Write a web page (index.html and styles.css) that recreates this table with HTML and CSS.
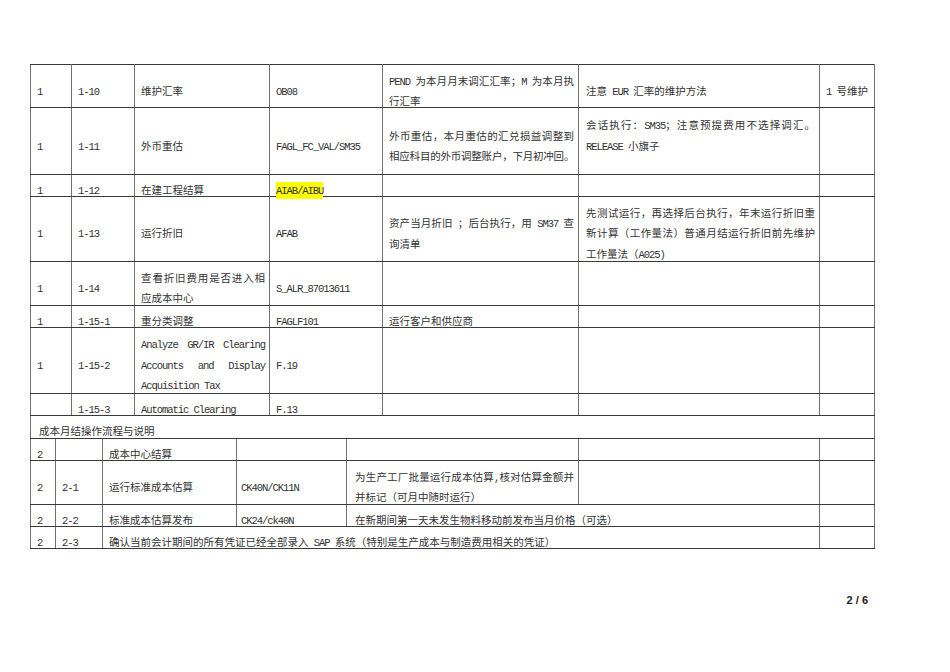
FILE: index.html
```html
<!DOCTYPE html>
<html lang="zh-CN">
<head>
<meta charset="utf-8">
<title>月结操作流程与说明</title>
<link rel="stylesheet" href="styles.css">
</head>
<body>
<div class="page">
<table class="sheet">
<colgroup>
<col class="w25"><col class="w16"><col class="w31"><col class="w32"><col class="w102"><col class="w33"><col class="w77"><col class="w36"><col class="w196"><col class="w241"><col class="w55">
</colgroup>
<tbody>
<tr class="h43">
<td colspan="2"><div class="t"><span class="en">1</span></div></td>
<td colspan="2"><div class="t"><span class="en">1-10</span></div></td>
<td colspan="2"><div class="t">维护汇率</div></td>
<td colspan="2"><div class="t"><span class="en">OB08</span></div></td>
<td><div class="t"><span class="jl"><span class="en">PEND </span>为本月月末调汇汇率；<span class="en">M </span>为本月执</span>行汇率</div></td>
<td class="pl7"><div class="t">注意<span class="en"> EUR </span>汇率的维护方法</div></td>
<td><div class="t"><span class="en">1 </span>号维护</div></td>
</tr>
<tr class="h67">
<td colspan="2"><div class="t"><span class="en">1</span></div></td>
<td colspan="2"><div class="t"><span class="en">1-11</span></div></td>
<td colspan="2"><div class="t">外币重估</div></td>
<td colspan="2"><div class="t"><span class="en">FAGL_FC_VAL/SM35</span></div></td>
<td><div class="t"><span class="jl">外币重估，本月重估的汇兑损益调整到</span><span class="jl tight">相应科目的外币调整账户，下月初冲回。</span></div></td>
<td class="pl7"><div class="t"><span class="jl">会话执行：<span class="en">SM35</span>；注意预提费用不选择调汇。</span><span class="en">RELEASE </span>小旗子<span class="blank"></span></div></td>
<td></td>
</tr>
<tr class="h21">
<td colspan="2"><div class="t"><span class="en">1</span></div></td>
<td colspan="2"><div class="t"><span class="en">1-12</span></div></td>
<td colspan="2"><div class="t">在建工程结算</div></td>
<td colspan="2"><div class="t"><span class="en hl">AIAB/AIBU</span></div></td>
<td></td>
<td></td>
<td></td>
</tr>
<tr class="h65">
<td colspan="2"><div class="t"><span class="en">1</span></div></td>
<td colspan="2"><div class="t"><span class="en">1-13</span></div></td>
<td colspan="2"><div class="t">运行折旧</div></td>
<td colspan="2"><div class="t"><span class="en">AFAB</span></div></td>
<td><div class="t"><span class="jl">资产当月折旧<span class="en"> </span>；后台执行，用<span class="en"> SM37 </span>查</span>询清单</div></td>
<td class="pl7"><div class="t"><span class="jl">先测试运行，再选择后台执行，年末运行折旧重</span><span class="jl">新计算（工作量法）普通月结运行折旧前先维护</span>工作量法（<span class="en">A025)</span></div></td>
<td></td>
</tr>
<tr class="h44">
<td colspan="2"><div class="t"><span class="en">1</span></div></td>
<td colspan="2"><div class="t"><span class="en">1-14</span></div></td>
<td colspan="2"><div class="t"><span class="jl">查看折旧费用是否进入相</span>应成本中心</div></td>
<td colspan="2"><div class="t"><span class="en">S_ALR_87013611</span></div></td>
<td></td>
<td></td>
<td></td>
</tr>
<tr class="h22">
<td colspan="2"><div class="t"><span class="en">1</span></div></td>
<td colspan="2"><div class="t"><span class="en">1-15-1</span></div></td>
<td colspan="2"><div class="t">重分类调整</div></td>
<td colspan="2"><div class="t"><span class="en">FAGLF101</span></div></td>
<td><div class="t">运行客户和供应商</div></td>
<td></td>
<td></td>
</tr>
<tr class="h66">
<td colspan="2"><div class="t"><span class="en">1</span></div></td>
<td colspan="2"><div class="t"><span class="en">1-15-2</span></div></td>
<td colspan="2"><div class="t"><span class="jl"><span class="en">Analyze GR/IR Clearing</span></span><span class="jl"><span class="en">Accounts and Display</span></span><span class="en">Acquisition Tax</span></div></td>
<td colspan="2"><div class="t"><span class="en">F.19</span></div></td>
<td></td>
<td></td>
<td></td>
</tr>
<tr class="h22">
<td colspan="2"></td>
<td colspan="2"><div class="t"><span class="en">1-15-3</span></div></td>
<td colspan="2"><div class="t"><span class="en">Automatic Clearing</span></div></td>
<td colspan="2"><div class="t"><span class="en">F.13</span></div></td>
<td></td>
<td></td>
<td></td>
</tr>
<tr class="h23">
<td colspan="11" class="pl8"><div class="t">成本月结操作流程与说明</div></td>
</tr>
<tr class="h22">
<td><div class="t"><span class="en">2</span></div></td>
<td colspan="2"></td>
<td colspan="2"><div class="t">成本中心结算</div></td>
<td colspan="2"></td>
<td colspan="2"></td>
<td></td>
<td></td>
</tr>
<tr class="h44">
<td><div class="t"><span class="en">2</span></div></td>
<td colspan="2"><div class="t"><span class="en">2-1</span></div></td>
<td colspan="2"><div class="t">运行标准成本估算</div></td>
<td colspan="2" class="pl4"><div class="t"><span class="en">CK40N/CK11N</span></div></td>
<td colspan="2" class="pl8"><div class="t"><span class="jl">为生产工厂批量运行成本估算<span class="en">,</span>核对估算金额并</span>并标记（可月中随时运行）</div></td>
<td></td>
<td></td>
</tr>
<tr class="h22">
<td><div class="t"><span class="en">2</span></div></td>
<td colspan="2"><div class="t"><span class="en">2-2</span></div></td>
<td colspan="2"><div class="t">标准成本估算发布</div></td>
<td colspan="2" class="pl4"><div class="t"><span class="en">CK24/ck40N</span></div></td>
<td colspan="3" class="pl8"><div class="t">在新期间第一天未发生物料移动前发布当月价格（可选）</div></td>
<td></td>
</tr>
<tr class="h22">
<td><div class="t"><span class="en">2</span></div></td>
<td colspan="2"><div class="t"><span class="en">2-3</span></div></td>
<td colspan="7"><div class="t">确认当前会计期间的所有凭证已经全部录入<span class="en"> SAP </span>系统（特别是生产成本与制造费用相关的凭证）</div></td>
<td></td>
</tr>
</tbody>
</table>
<div class="pnum">2 / 6</div>
</div>
</body>
</html>
```

FILE: styles.css
```css
* {
  box-sizing: border-box;
}

html,
body {
  margin: 0;
  background: #ffffff;
}

body {
  color: #333333;
  font-family: "Noto Sans CJK SC", sans-serif;
  font-size: 10.5px;
  text-autospace: no-autospace;
  text-spacing-trim: space-all;
}

.page {
  width: 950px;
  height: 672px;
  padding: 64px 0 0 30px;
}

.sheet {
  border-collapse: collapse;
  table-layout: fixed;
  width: 845px;
}

.w25 { width: 25px; }
.w16 { width: 16px; }
.w31 { width: 31px; }
.w32 { width: 32px; }
.w102 { width: 102px; }
.w33 { width: 33px; }
.w77 { width: 77px; }
.w36 { width: 36px; }
.w196 { width: 196px; }
.w241 { width: 241px; }
.w55 { width: 55px; }

.h21 { height: 21px; }
.h22 { height: 22px; }
.h23 { height: 23px; }
.h43 { height: 43px; }
.h44 { height: 44px; }
.h65 { height: 65px; }
.h66 { height: 66px; }
.h67 { height: 67px; }

.sheet td {
  border-top: 1px solid #3a3a3a;
  border-bottom: 1px solid #3a3a3a;
  border-left: 1px solid #707070;
  border-right: 1px solid #707070;
  padding: 0 4px 0 6px;
  vertical-align: middle;
  line-height: 20.5px;
}

.sheet td.pl4 { padding-left: 4px; }
.sheet td.pl7 { padding-left: 7px; }
.sheet td.pl8 { padding-left: 8px; }

/* text sits low in each line box, as in the printed document */
.t {
  padding-top: 5px;
  margin-bottom: -5px;
}

.en {
  font-family: "Liberation Mono", monospace;
  letter-spacing: -1.05px;
  line-height: 1;
}

.jl {
  display: block;
  text-align: justify;
  text-align-last: justify;
}

.tight {
  letter-spacing: -0.35px;
}

.blank {
  display: block;
  height: 20.5px;
}

.hl {
  background: #ffff00;
  padding: 3px 0 2px;
}

.pnum {
  width: 838px;
  margin-top: 44px;
  text-align: right;
  font-family: "Liberation Sans", Arial, sans-serif;
  font-weight: bold;
  font-size: 11px;
  line-height: 14px;
  color: #222222;
}
```
